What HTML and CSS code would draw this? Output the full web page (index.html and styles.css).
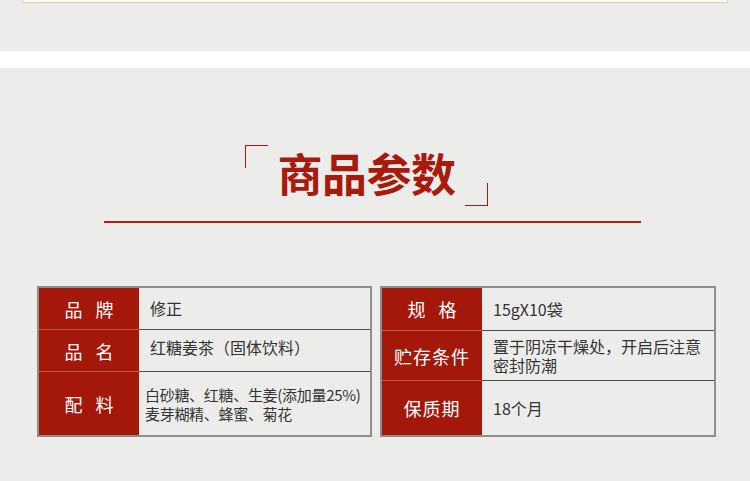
FILE: index.html
```html
<!DOCTYPE html>
<html>
	<head>
		<meta charset="utf-8">
		<link rel="stylesheet" href="styles.css">
	</head>
	<body>
		<div class="top-strip">
			<div class="top-card"></div>
		</div>
		<div class="band"></div>

		<section class="params">
			<div class="title-wrap">
				<h2 class="title">商品参数</h2>
			</div>
			<div class="rule"></div>

			<div class="tables">
				<div class="sheet sheet-left">
					<div class="label wide">品牌</div>
					<div class="value">修正</div>
					<div class="label wide">品名</div>
					<div class="value value-up">红糖姜茶（固体饮料）</div>
					<div class="label wide">配料</div>
					<div class="value value-tight">白砂糖、红糖、生姜(添加量25%)<br>麦芽糊精、蜂蜜、菊花</div>
				</div>

				<div class="sheet sheet-right">
					<div class="label wide">规格</div>
					<div class="value">15gX10袋</div>
					<div class="label">贮存条件</div>
					<div class="value">置于阴凉干燥处，开启后注意<br>密封防潮</div>
					<div class="label">保质期</div>
					<div class="value">18个月</div>
				</div>
			</div>
		</section>
	</body>
</html>
```

FILE: styles.css
```css
body {
	margin: 0;
	padding: 0;
	height: 100vh;
	overflow: hidden;
	background-color: #ecedeb;
	font-family: "Noto Sans CJK SC", "Noto Sans", sans-serif;
}

.top-strip {
	height: 51px;
}
.top-card {
	margin: 0 22px 0 22px;
	height: 2px;
	background-color: #fff;
	border: 1px solid #f1c7a1;
	border-top: none;
}
.band {
	height: 17px;
	background-color: #fff;
}

.params {
	padding-top: 77px;
}

.title-wrap {
	display: flex;
	justify-content: center;
	padding-right: 17px;
}
.title {
	position: relative;
	width: 243px;
	height: 61px;
	margin: 0;
	padding-top: 5px;
	box-sizing: border-box;
	text-align: center;
	font-size: 45px;
	line-height: 45px;
	font-weight: bold;
	color: #a81a0d;
	letter-spacing: -0.5px;
}
.title::before,
.title::after {
	content: "";
	position: absolute;
	width: 22px;
	height: 22px;
	border-color: #a81a0d;
	border-style: solid;
}
.title::before {
	left: 0;
	top: 0;
	border-width: 1px 0 0 1px;
}
.title::after {
	right: 0;
	bottom: 0;
	border-width: 0 1px 1px 0;
}

.rule {
	width: 537px;
	height: 0;
	margin: 15px 0 0 104px;
	border-top: 2px solid #b3220f;
}

.tables {
	display: flex;
	gap: 8px;
	margin-top: 63px;
	padding-left: 37px;
}

.sheet {
	display: grid;
	grid-template-columns: 100px 1fr;
	border: 2px solid #8e8e8e;
	box-sizing: border-box;
}
.sheet-left {
	width: 335px;
	grid-template-rows: 41px 42px 64px;
}
.sheet-right {
	width: 336px;
	grid-template-rows: 42px 50px 55px;
}

.label {
	display: flex;
	align-items: center;
	justify-content: center;
	background-color: #a3180a;
	color: #fff;
	font-size: 18px;
	letter-spacing: 1px;
	border-top: 1px solid #c55a4c;
}
.label.wide {
	letter-spacing: 13px;
	padding-left: 13px;
}
.value {
	display: flex;
	align-items: center;
	padding-left: 11px;
	font-size: 16px;
	line-height: 19px;
	color: #333;
	border-top: 1px solid #4f4f4f;
}
.label:first-child,
.label:first-child + .value {
	border-top: none;
}
.value-up {
	padding-bottom: 6px;
}
.value-tight {
	padding-left: 6px;
	font-size: 15px;
	letter-spacing: -0.3px;
}
```
